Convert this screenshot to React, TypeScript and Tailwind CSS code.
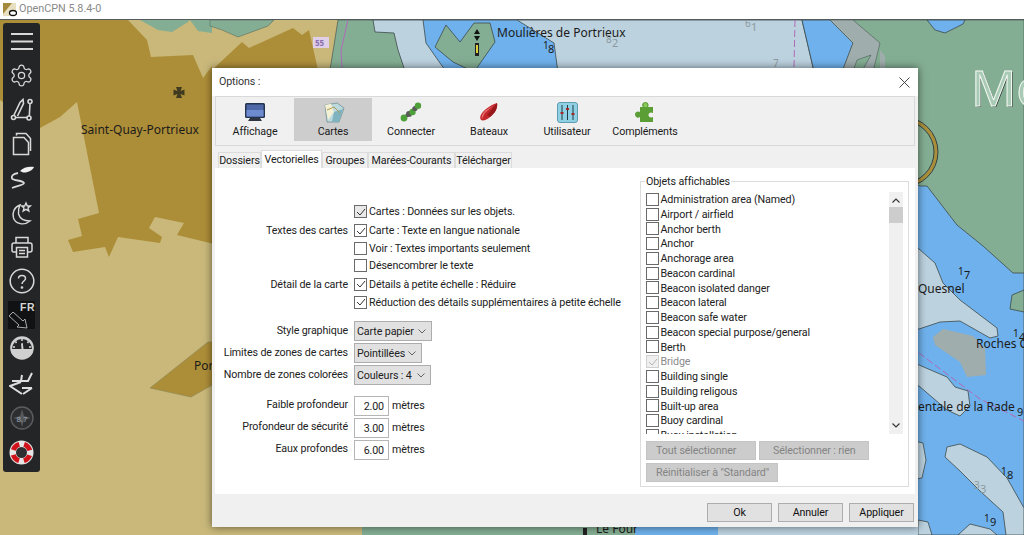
import { Settings } from "lucide-react";
import type { ReactNode } from "react";

const OBJECTS = [
  "Administration area (Named)",
  "Airport / airfield",
  "Anchor berth",
  "Anchor",
  "Anchorage area",
  "Beacon cardinal",
  "Beacon isolated danger",
  "Beacon lateral",
  "Beacon safe water",
  "Beacon special purpose/general",
  "Berth",
  "Bridge",
  "Building single",
  "Building religous",
  "Built-up area",
  "Buoy cardinal",
  "Buoy installation",
];

function ChartMap() {
  const line = "#3d4a4a";
  return (
    <svg className="absolute inset-0" width={1024} height={515} viewBox="0 20 1024 515">
      <rect x={0} y={20} width={1024} height={515} fill="#c9b87a" />
      {/* land, dark tan */}
      <path
        d="M0 20H128L147 40L151 57L193 55L203 78L212 66L214 244L177 235L184 223L155 217L149 228L162 237L160 243L118 237L109 257L105 247L73 252L68 240L82 236L78 219L99 213L77 102L60 117L40 128L0 100Z"
        fill="#ad8e38"
      />
      <path d="M140 20L158 30L172 32L188 22L190 20Z" fill="#84ae93" />
      <path d="M190 20L198 31L212 33V20Z" fill="#84ae93" />
      <path d="M210 20H274L268 26L238 37L222 30L210 26Z" fill="#84ae93" stroke={line} strokeWidth={0.4} />
      <path d="M212 70L242 42L249 48L293 28L302 35L309 30L318 70Z" fill="#ad8e38" />
      <path d="M150 388L208 342L214 342V384L191 397Z" fill="#ad8e38" stroke="#8f8a5a" strokeWidth={0.7} />
      {/* top shallows and island */}
      <path d="M338 20H1024V535H362V300H330L330 70Z" fill="#84ae93" stroke={line} strokeWidth={0.6} />
      <path d="M373 20H802L816 80H408L398 50L394 33L375 32Z" fill="#bcd2df" stroke={line} strokeWidth={0.8} />
      <path d="M423 20H517L554 43L559 80H452L440 63L426 43Z" fill="#6fb1ec" stroke={line} strokeWidth={0.8} />
      <path d="M446 25L460 42L474 23H490L495 42L474 72L453 62L435 47Z" fill="#84ae93" stroke={line} strokeWidth={0.8} />
      <path d="M802 20H830L853 43L839 80H816Z" fill="#6fb1ec" stroke={line} strokeWidth={0.8} />
      <path d="M830 20H853L880 43L871 80H857L871 55L857 60L850 80H839L853 43Z" fill="#a0adad" stroke={line} strokeWidth={0.5} />
      <path d="M880 50L885 56V80H880Z" fill="#a0adad" />
      <path d="M795 20L794 68" stroke="#b06ab8" strokeWidth={1} strokeDasharray="7 3" fill="none" />
      <path d="M348 20L341 50L342 68" stroke="#b06ab8" strokeWidth={1} fill="none" />
      {/* right hand side */}
      <path d="M880 170L920 186L927 186L957 225L983 246L1013 273H1024V535H880Z" fill="#6fb1ec" stroke={line} strokeWidth={0.8} />
      <path d="M927 20L935 30L945 33L963 24L965 20Z" fill="#6fb1ec" stroke={line} strokeWidth={0.8} />
      <path d="M1024 290L1012 295L1010 309L1024 312Z" fill="#84ae93" stroke={line} strokeWidth={0.8} />
      <circle cx={903} cy={152} r={33} fill="#84ae93" stroke="#ad8e38" strokeWidth={3} />
      <circle cx={903} cy={152} r={35} fill="none" stroke="#222" strokeWidth={0.8} />
      <circle cx={903} cy={152} r={31} fill="none" stroke="#222" strokeWidth={0.8} />
      <path d="M900 240L919 249L935 263L943 283L960 300L997 328L998 336L990 338L960 321L940 322L919 329L900 330Z" fill="#bcd2df" stroke={line} strokeWidth={0.8} />
      <path d="M935 345L933 337L943 329L973 336L985 348L986 375L967 377L960 362Z" fill="#a0adad" />
      <path d="M900 358L919 365L947 377L955 387L968 391L970 406L960 416L947 410L919 386L900 380Z" fill="#bcd2df" stroke={line} strokeWidth={0.8} />
      <path d="M947 447L960 444L987 457L1007 478L1024 508V535H1006L1003 512L980 491L960 471L945 457Z" fill="#bcd2df" stroke={line} strokeWidth={0.8} />
      <path d="M910 440L923 443L926 460L922 478L910 480Z" fill="#bcd2df" stroke={line} strokeWidth={0.8} />
      <path d="M958 535L970 524L990 529L997 535Z" fill="#bcd2df" stroke={line} strokeWidth={0.8} />
      <path d="M918 520L928 522L932 535H918Z" fill="#bcd2df" stroke={line} strokeWidth={0.8} />
      <path d="M919 353L980 399L1024 421" stroke="#b06ab8" strokeWidth={1} strokeDasharray="7 3" fill="none" />
      {/* strip below the dialog */}
      <rect x={212} y={524} width={150} height={11} fill="#c9b87a" />
      <rect x={362} y={524} width={273} height={11} fill="#84ae93" />
      <rect x={635} y={524} width={83} height={11} fill="#6fb1ec" />
      <rect x={718} y={524} width={200} height={11} fill="#bcd2df" />
      {/* symbols */}
      <path d="M176 87h6l-1.500 4 4-1.500v6l-4-1.500 1.500 4h-6l1.500-4-4 1.500v-6l4 1.500z" fill="#403a20" />
      <rect x={313} y={37} width={16} height={11} fill="#e0cfe8" />
      <text x={315} y={46} fontSize={8} fill="#8a6fb0" fontWeight={700}>55</text>
      <path d="M477 29l3 5h-6zM477 41l3-5h-6z" fill="#111" />
      <rect x={475} y={43} width={4} height={13} fill="#222" />
      <rect x={476} y={45} width={2} height={8} fill="#e0d040" />
      <rect x={583} y={528} width={4} height={7} fill="#222" />
      <g className="font-['Noto_Sans','Open_Sans',sans-serif]" fill="#1b1b1b" fontSize={12}>
        <text x={81} y={134}>Saint-Quay-Portrieux</text>
        <text x={497} y={37}>Moulières de Portrieux</text>
        <text x={194} y={370}>Por</text>
        <text x={918} y={293}>Quesnel</text>
        <text x={976} y={348}>Roches C</text>
        <text x={918} y={411}>entale de la Rade</text>
        <text x={596} y={533}>Le Four</text>
        <text x={958} y={275} fontSize={10}>1</text>
        <text x={964} y={279} fontSize={11}>7</text>
        <text x={543} y={49} fontSize={10}>1</text>
        <text x={548} y={53} fontSize={11}>8</text>
        <text x={1013} y={337} fontSize={10}>1</text>
        <text x={1019} y={341} fontSize={11}>4</text>
        <text x={1017} y={416} fontSize={11}>9</text>
        <text x={1001} y={475} fontSize={10}>1</text>
        <text x={1007} y={479} fontSize={11}>8</text>
        <text x={984} y={522} fontSize={10}>1</text>
        <text x={990} y={526} fontSize={11}>9</text>
        <g fill="#8d9a9e">
          <text x={745} y={27} fontSize={10}>6</text>
          <text x={751} y={31} fontSize={11}>1</text>
          <text x={606} y={43} fontSize={10}>8</text>
          <text x={612} y={47} fontSize={11}>2</text>
          <text x={773} y={67} fontSize={10}>7</text>
          <text x={974} y={489} fontSize={10}>3</text>
          <text x={980} y={493} fontSize={11}>3</text>
        </g>
      </g>
      <g fontSize={50} className="font-['Noto_Sans','Open_Sans',sans-serif]">
        <text x={972} y={107} fill="#2c3a33">Mo</text>
        <text x={971} y={106} fill="#a9cbb6" stroke="#f2f7f2" strokeWidth={1}>Mo</text>
      </g>
    </svg>
  );
}

function SideIcon({ children, className }: { children: ReactNode; className: string }) {
  return <div className={`flex h-[28px] w-full shrink-0 items-center justify-center ${className}`}>{children}</div>;
}

function Sidebar() {
  const s = "#d9d9d9";
  return (
    <div className="absolute left-[3px] top-[3px] flex h-[449px] w-[37px] flex-col rounded-[3px] bg-[#242526] pt-[4px]">
      <SideIcon className="mt-0">
        <svg width={24} height={19} viewBox="0 0 24 19" stroke={s} strokeWidth={2}>
          <path d="M1 2h22M1 9.500h22M1 17h22" />
        </svg>
      </SideIcon>
      <SideIcon className="mt-[6px]">
        <Settings size={25} strokeWidth={1.200} color={s} />
      </SideIcon>
      <SideIcon className="mt-[7px]">
        <svg width={24} height={24} viewBox="0 0 24 24" fill="none" stroke={s} strokeWidth={1.600}>
          <circle cx={3.500} cy={19.500} r={2} />
          <circle cx={19} cy={20} r={2} />
          <circle cx={20} cy={3.500} r={2} />
          <path d="M5.500 19.500H17M19.300 18L20 5.500M4 17L10 4.500l3-3 .5 4-6 12.500" />
        </svg>
      </SideIcon>
      <SideIcon className="mt-[6px]">
        <svg width={20} height={24} viewBox="0 0 20 24" fill="none" stroke={s} strokeWidth={1.500}>
          <path d="M1.500 5.500H12l4.500 5V22.500H1.500Z" />
          <path d="M4.500 3.500V1.500H14l4.500 5V19" />
        </svg>
      </SideIcon>
      <SideIcon className="mt-[5px]">
        <svg width={26} height={24} viewBox="0 0 26 24" fill="none">
          <path d="M9 8C4 9 2 11 3 13.500C4.500 16 14 15 15 18C15 20 8 21 3 23" stroke={s} strokeWidth={1.800} />
          <path d="M11 6C14 2.500 20 1 25 2C24 5 19 8 14 7.500Z" fill="#f0f0f0" />
        </svg>
      </SideIcon>
      <SideIcon className="mt-[9px]">
        <svg width={22} height={26} viewBox="0 0 22 26" fill="none" stroke={s} strokeWidth={1.400}>
          <path d="M9 4C3 6 1 12 2.500 17C4.500 23 13 25 19 20C14 20 9 18 7.500 13C7 9 8 6 9 4Z" />
          <path d="M15 2l1.300 3h3l-2.300 2 .8 3-2.800-1.700L12.200 10l.8-3-2.300-2h3z" />
        </svg>
      </SideIcon>
      <SideIcon className="mt-[5px]">
        <svg width={22} height={22} viewBox="0 0 22 22" fill="none" stroke={s} strokeWidth={1.500}>
          <path d="M5 7V1.500H17V7M5 16H2.500C1.500 16 1 15 1 14V9C1 8 2 7 3 7H19C20 7 21 8 21 9V14C21 15 20 16 19 16H17" />
          <rect x={5.500} y={11.500} width={11} height={9.500} />
          <path d="M8 14.500h6M8 17.500h6" />
        </svg>
      </SideIcon>
      <SideIcon className="mt-[6px]">
        <svg width={26} height={26} viewBox="0 0 26 26" fill="none" stroke={s} strokeWidth={1.500}>
          <circle cx={13} cy={13} r={11.800} />
          <path d="M9.500 10.500C9.500 6.500 16.500 6.500 16.500 10.500C16.500 13 13 13 13 16" />
          <circle cx={13} cy={19.500} r={0.6} />
        </svg>
      </SideIcon>
      <SideIcon className="mt-[6px]">
        <div className="relative flex h-[28px] w-[27px] items-end bg-[#111213]">
          <span className="absolute right-[0px] top-[1px] font-['Liberation_Sans',sans-serif] text-[10.500px] leading-none font-bold tracking-[0.5px] text-[#d5d5d5]">
            FR
          </span>
          <svg width={21} height={20} viewBox="0 0 21 20" fill="none" stroke="#bdbdbd" strokeWidth={0.9}>
            <path d="M1 7L5 3L15 12L17 10L19 19L9 18L11 16Z" />
          </svg>
        </div>
      </SideIcon>
      <SideIcon className="mt-[5px]">
        <svg width={24} height={24} viewBox="0 0 24 24">
          <circle cx={12} cy={12} r={11.800} fill="#d0d0d0" />
          <path d="M2 13A10 10 0 0 1 22 13H13.500L12.800 7L11 7.500L11.500 13Z" fill="#242526" />
          <path d="M12 5V3M6.500 7L5.500 5.500M17.500 7L18.500 5.500M5 11H3M19 11H21" stroke="#d9d9d9" strokeWidth={1.500} />
        </svg>
      </SideIcon>
      <SideIcon className="mt-[7px]">
        <svg width={25} height={24} viewBox="0 0 25 24" fill="none" stroke="#dedede" strokeWidth={2}>
          <path d="M3 10H19L23 2" />
          <path d="M12 10L13 4" />
          <path d="M12 11L1 15L13 23" />
          <path d="M13 17H23" />
          <path d="M14 23L23 17" />
        </svg>
      </SideIcon>
      <SideIcon className="mt-[7px]">
        <svg width={24} height={24} viewBox="0 0 24 24">
          <circle cx={12} cy={12} r={11} fill="#2d2e30" stroke="#5b5d60" strokeWidth={1.400} />
          <path d="M12 3L14 10L21 12L14 14L12 21L10 14L3 12L10 10Z" fill="#55585b" />
          <text x={12} y={15.500} fontSize={8} textAnchor="middle" fill="#9aa6b3" className="font-['Liberation_Sans',sans-serif]">
            8.7
          </text>
        </svg>
      </SideIcon>
      <SideIcon className="mt-[6px]">
        <svg width={25} height={25} viewBox="0 0 25 25">
          <circle cx={12.500} cy={12.500} r={12} fill="#e6e6e6" />
          <circle cx={12.500} cy={12.500} r={8.500} fill="none" stroke="#d0121b" strokeWidth={5} strokeDasharray="8.500 4.850" strokeDashoffset={4.250} transform="rotate(45 12.500 12.500)" />
          <circle cx={12.500} cy={12.500} r={5.500} fill="#2f2f31" />
        </svg>
      </SideIcon>
    </div>
  );
}

function MonitorIcon() {
  return (
    <svg width={22} height={21} viewBox="0 0 22 21">
      <rect x={1} y={1} width={20} height={15} rx={1.500} fill="#24334f" />
      <rect x={2.500} y={2.500} width={17} height={12} fill="#4f69a8" />
      <rect x={2.500} y={8} width={17} height={6.500} fill="#6f8bd0" />
      <path d="M6 16H16L18 19H4Z" fill="#2e3440" />
    </svg>
  );
}

function ChartsIcon() {
  return (
    <svg width={24} height={21} viewBox="0 0 24 21">
      <path d="M4 3L16 1L23 6L18 20H6Z" fill="#bcd9dd" stroke="#67858a" strokeWidth={0.7} />
      <path d="M4 3L10 1.800L13 10L7 18Z" fill="#f4f0d4" />
      <path d="M13 10L22 7L18 20H11Z" fill="#7fb3c0" />
      <path d="M6 8L13 5L19 11" stroke="#b29a58" strokeWidth={1} fill="none" />
    </svg>
  );
}

function ConnectIcon() {
  return (
    <svg width={22} height={20} viewBox="0 0 22 20">
      <path d="M4 16L18 4" stroke="#3b3b3b" strokeWidth={3} />
      <circle cx={4} cy={16} r={3.400} fill="#4da03a" />
      <circle cx={9} cy={12} r={3} fill="#5a5a5a" />
      <circle cx={12.500} cy={10} r={3.200} fill="#4da03a" />
      <circle cx={15} cy={6.500} r={2.600} fill="#5a5a5a" />
      <circle cx={18} cy={3.800} r={3.200} fill="#4da03a" />
    </svg>
  );
}

function BoatIcon() {
  return (
    <svg width={20} height={20} viewBox="0 0 20 20">
      <path d="M18 1C19 6 16 11 11 15C8 18 4 19 2 18C0 15 2 11 7 7C11 4 14 2 18 1Z" fill="#c4272b" />
      <path d="M15 3L6 11L3 17C2 15 3 11 7 8Z" fill="#e36a6a" />
      <path d="M18 1C19 6 16 11 11 15L8 13Z" fill="#98181c" />
    </svg>
  );
}

function SlidersIcon() {
  return (
    <svg width={21} height={21} viewBox="0 0 21 21">
      <rect x={0.500} y={0.500} width={20} height={20} rx={2.500} fill="#8ed0e4" stroke="#5f9cb0" />
      <path d="M5 3V18M10.500 3V18M16 3V18" stroke="#1f3a44" strokeWidth={1} />
      <path d="M3.500 11h3M9 7h3M14.500 12h3" stroke="#a52727" strokeWidth={2} />
    </svg>
  );
}

function PuzzleIcon() {
  return (
    <svg width={20} height={21} viewBox="0 0 20 21">
      <path
        d="M8 5C6 3 8 0 10.500 0C13 0 14.500 3 13 5H18V11C15.500 9.500 13.500 11 13.500 13C13.500 15 15.500 16 18 15V20H5V15C3 17 0 15 0 12.500C0 10 3 8.500 5 10V5Z"
        fill="#5b9e35"
      />
      <path d="M10.500 1C12 1 13 3 12 5H9C8 3 9 1 10.500 1Z" fill="#8cc95c" />
    </svg>
  );
}

function ToolbarItem({ label, active, children }: { label: string; active?: boolean; children: ReactNode }) {
  return (
    <div className={`flex h-[43px] w-[78px] flex-col items-center ${active ? "bg-[#cdcdcd]" : ""}`}>
      <div className="flex h-[26px] items-center pt-[2px]">{children}</div>
      <span className="mt-[3px] text-[#1a1a1a]">{label}</span>
    </div>
  );
}

function Tab({ label, active, className }: { label: string; active?: boolean; className: string }) {
  return (
    <div
      className={`flex items-center justify-center border-x border-t border-[#dcdcdc] pt-[2px] ${className} ${
        active ? "h-[18px] bg-white" : "h-[16px] bg-[#f0f0f0]"
      }`}
    >
      {label}
    </div>
  );
}

function Check({ checked, disabled, focused }: { checked?: boolean; disabled?: boolean; focused?: boolean }) {
  return (
    <span
      className={`flex h-[13px] w-[13px] shrink-0 items-center justify-center border ${
        disabled ? "border-[#d0d0d0] bg-[#efefef]" : focused ? "border-[#6a6a6a] bg-[#e8e8e8]" : "border-[#6a6a6a] bg-white"
      }`}
    >
      {checked ? (
        <svg width={10} height={8} viewBox="0 0 10 8" fill="none" stroke={disabled ? "#b5b5b5" : "#333333"} strokeWidth={1}>
          <path d="M1 4L4 7L9 1" />
        </svg>
      ) : null}
    </span>
  );
}

function OptionRow({
  label,
  text,
  checked,
  focused,
  height,
}: {
  label?: string;
  text: string;
  checked?: boolean;
  focused?: boolean;
  height: string;
}) {
  return (
    <div className={`flex items-center ${height}`}>
      <span className="w-[134px] shrink-0 pr-[1px] pt-[2px] text-right">{label}</span>
      <span className="ml-[5px]">
        <Check checked={checked} focused={focused} />
      </span>
      <span className="ml-[2px] pt-[2px]">{text}</span>
    </div>
  );
}

function SelectRow({ label, value, width }: { label: string; value: string; width: string }) {
  return (
    <div className="flex h-[20px] items-center">
      <span className="w-[134px] shrink-0 pr-[1px] text-right">{label}</span>
      <div
        className={`ml-[5px] flex h-[20px] items-center justify-between border border-[#adadad] bg-[#e1e1e1] pl-[2px] pr-[5px] ${width}`}
      >
        <span className="pt-[2px]">{value}</span>
        <svg width={8} height={5} viewBox="0 0 8 5" fill="none" stroke="#444444" strokeWidth={0.8}>
          <path d="M.5 .5L4 4L7.500 .5" />
        </svg>
      </div>
    </div>
  );
}

function DepthRow({ label, value }: { label: string; value: string }) {
  return (
    <div className="flex h-[20px] items-center">
      <span className="mt-[-2px] w-[134px] shrink-0 pr-[1px] text-right">{label}</span>
      <div className="ml-[5px] flex h-[20px] w-[35px] items-center justify-end border border-[#b5b5b5] bg-white pr-[4px] pt-[2px]">
        {value}
      </div>
      <span className="ml-[3px] pt-[1px]">mètres</span>
    </div>
  );
}

function GreyButton({ label, className }: { label: string; className: string }) {
  return (
    <div className={`flex h-[19px] items-center border border-[#c4c4c4] bg-[#cccccc] pl-[9px] pt-[2px] text-[#858585] ${className}`}>
      {label}
    </div>
  );
}

function FooterButton({ label }: { label: string }) {
  return (
    <div className="flex h-[19px] w-[65px] items-center justify-center border border-[#adadad] bg-[#e1e1e1] pt-[2px] text-[#111111]">
      {label}
    </div>
  );
}

function OptionsDialog() {
  return (
    <div className="absolute left-[212px] top-[48px] flex h-[459px] w-[706px] flex-col whitespace-nowrap bg-[#f0f0f0] font-['Roboto',sans-serif] text-[10.700px] leading-none tracking-[-0.12px] text-[#222222] shadow-[0_0_8px_rgba(0,0,0,0.55)]">
      <div className="flex h-[28px] shrink-0 items-center justify-between bg-white pl-[7px] pr-[8px] text-[#333333]">
        <span>Options :</span>
        <svg width={11} height={11} viewBox="0 0 11 11" stroke="#333333" strokeWidth={0.9}>
          <path d="M.5 .5L10.500 10.500M10.500 .5L.5 10.500" />
        </svg>
      </div>
      <div className="mx-[3px] flex h-[50px] shrink-0 border border-[#d9d9d9] pt-[1px]">
        <ToolbarItem label="Affichage">
          <MonitorIcon />
        </ToolbarItem>
        <ToolbarItem label="Cartes" active>
          <ChartsIcon />
        </ToolbarItem>
        <ToolbarItem label="Connecter">
          <ConnectIcon />
        </ToolbarItem>
        <ToolbarItem label="Bateaux">
          <BoatIcon />
        </ToolbarItem>
        <ToolbarItem label="Utilisateur">
          <SlidersIcon />
        </ToolbarItem>
        <ToolbarItem label="Compléments">
          <PuzzleIcon />
        </ToolbarItem>
      </div>
      <div className="mt-[4px] flex h-[18px] shrink-0 items-end pl-[6px]">
        <Tab label="Dossiers" className="w-[43px]" />
        <Tab label="Vectorielles" className="w-[61px]" active />
        <Tab label="Groupes" className="w-[46px]" />
        <Tab label="Marées-Courants" className="w-[87px]" />
        <Tab label="Télécharger" className="w-[57px]" />
      </div>
      <div className="mx-[3px] flex h-[326px] shrink-0 bg-white">
        <div className="w-[425px] shrink-0 pt-[34px]">
          <OptionRow height="h-[19px]" text="Cartes : Données sur les objets." checked focused />
          <OptionRow height="h-[19px]" label="Textes des cartes" text="Carte : Texte en langue nationale" checked />
          <OptionRow height="h-[16px]" text="Voir : Textes importants seulement" />
          <OptionRow height="h-[18px]" text="Désencombrer le texte" />
          <OptionRow height="h-[20px]" label="Détail de la carte" text="Détails à petite échelle : Réduire" checked />
          <OptionRow height="h-[16px]" text="Réduction des détails supplémentaires à petite échelle" checked />
          <div className="mt-[11px] flex flex-col gap-[2px]">
            <SelectRow label="Style graphique" value="Carte papier" width="w-[78px]" />
            <SelectRow label="Limites de zones de cartes" value="Pointillées" width="w-[68px]" />
            <SelectRow label="Nombre de zones colorées" value="Couleurs : 4" width="w-[77px]" />
          </div>
          <div className="mt-[11px] flex flex-col gap-[2px]">
            <DepthRow label="Faible profondeur" value="2.00" />
            <DepthRow label="Profondeur de sécurité" value="3.00" />
            <DepthRow label="Eaux profondes" value="6.00" />
          </div>
        </div>
        <div className="relative mt-[13px] flex h-[306px] w-[269px] shrink-0 flex-col border border-[#dcdcdc] pl-[5px] pt-[10px]">
          <span className="absolute left-[4px] top-[-5px] bg-white px-[1px]">Objets affichables</span>
          <div className="flex h-[242px] w-[257px] shrink-0">
            <div className="min-w-0 flex-1 overflow-hidden">
              {OBJECTS.map((name) => (
                <div key={name} className="flex h-[14.750px] shrink-0 items-center gap-[1.500px]">
                  <Check checked={name === "Bridge"} disabled={name === "Bridge"} />
                  <span className={name === "Bridge" ? "pt-[2px] text-[#8c8c8c]" : "pt-[2px]"}>{name}</span>
                </div>
              ))}
            </div>
            <div className="flex w-[14px] shrink-0 flex-col items-center justify-between bg-[#f0f0f0] py-[6px]">
              <div className="flex w-full flex-col items-center">
                <svg width={8} height={5} viewBox="0 0 8 5" fill="none" stroke="#333333" strokeWidth={1.100}>
                  <path d="M.5 4.500L4 1L7.500 4.500" />
                </svg>
                <div className="mt-[4px] h-[16px] w-full bg-[#cdcdcd]" />
              </div>
              <svg width={8} height={5} viewBox="0 0 8 5" fill="none" stroke="#333333" strokeWidth={1.100}>
                <path d="M.5 .5L4 4L7.500 .5" />
              </svg>
            </div>
          </div>
          <div className="mt-[7px] flex gap-[3px]">
            <GreyButton label="Tout sélectionner" className="w-[110px]" />
            <GreyButton label="Sélectionner : rien" className="w-[110px] pl-[13px]" />
          </div>
          <GreyButton label='Réinitialiser à "Standard"' className="mt-[3px] w-[132px]" />
        </div>
      </div>
      <div className="flex flex-1 justify-end gap-[6px] pr-[4px] pt-[9px]">
        <FooterButton label="Ok" />
        <FooterButton label="Annuler" />
        <FooterButton label="Appliquer" />
      </div>
    </div>
  );
}

export default function App() {
  return (
    <div className="flex h-[535px] w-[1024px] flex-col overflow-hidden bg-white">
      <div className="flex h-[20px] shrink-0 items-center border-b border-[#555a5c] bg-white pl-[2px]">
        <svg width={15} height={15} viewBox="0 0 15 15">
          <rect x={1} y={1} width={13} height={13} fill="#e8dfc0" />
          <path d="M1 1H10L1 12Z" fill="#a58a3c" />
          <ellipse cx={11} cy={11} rx={3.500} ry={2.500} fill="#fff" stroke="#111" strokeWidth={1.300} />
        </svg>
        <span className="ml-[2px] font-['Roboto',sans-serif] text-[10.800px] leading-none text-[#8a8a8a]">OpenCPN 5.8.4-0</span>
      </div>
      <div className="relative min-h-0 flex-1">
        <ChartMap />
        <Sidebar />
        <OptionsDialog />
      </div>
    </div>
  );
}
